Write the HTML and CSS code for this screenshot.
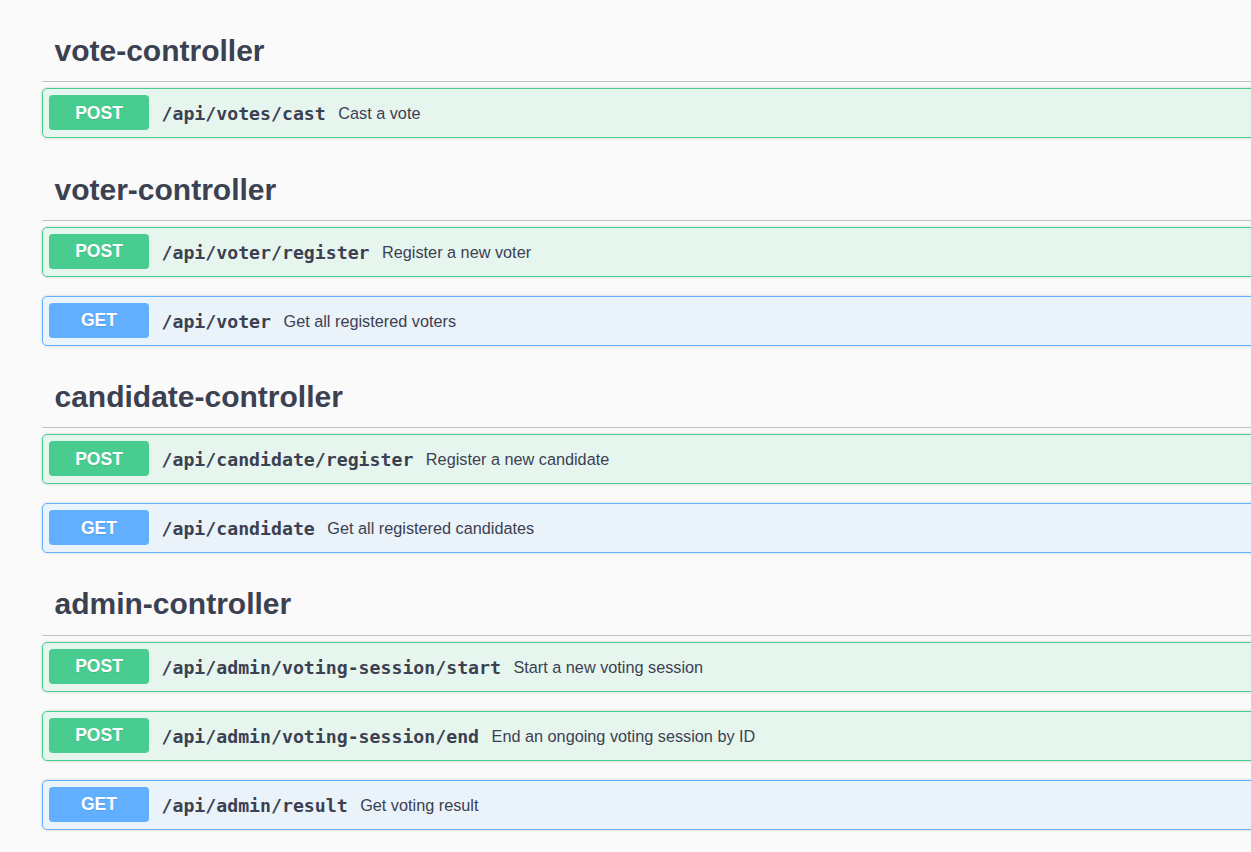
FILE: index.html
```html
<!DOCTYPE html>
<html>
<head>
<meta charset="utf-8">
<link rel="stylesheet" href="styles.css">
</head>
<body>
<div class="wrapper">
  <section class="tag-section">
    <h3 class="tag"><span>vote-controller</span></h3>
    <div class="opblock post">
      <div class="summary"><span class="method">POST</span><span class="path">/api/votes/cast</span><span class="desc">Cast a vote</span></div>
    </div>
  </section>
  <section class="tag-section">
    <h3 class="tag"><span>voter-controller</span></h3>
    <div class="opblock post">
      <div class="summary"><span class="method">POST</span><span class="path">/api/voter/register</span><span class="desc">Register a new voter</span></div>
    </div>
    <div class="opblock get">
      <div class="summary"><span class="method">GET</span><span class="path">/api/voter</span><span class="desc">Get all registered voters</span></div>
    </div>
  </section>
  <section class="tag-section">
    <h3 class="tag"><span>candidate-controller</span></h3>
    <div class="opblock post">
      <div class="summary"><span class="method">POST</span><span class="path">/api/candidate/register</span><span class="desc">Register a new candidate</span></div>
    </div>
    <div class="opblock get">
      <div class="summary"><span class="method">GET</span><span class="path">/api/candidate</span><span class="desc">Get all registered candidates</span></div>
    </div>
  </section>
  <section class="tag-section">
    <h3 class="tag"><span>admin-controller</span></h3>
    <div class="opblock post">
      <div class="summary"><span class="method">POST</span><span class="path">/api/admin/voting-session/start</span><span class="desc">Start a new voting session</span></div>
    </div>
    <div class="opblock post">
      <div class="summary"><span class="method">POST</span><span class="path">/api/admin/voting-session/end</span><span class="desc">End an ongoing voting session by ID</span></div>
    </div>
    <div class="opblock get">
      <div class="summary"><span class="method">GET</span><span class="path">/api/admin/result</span><span class="desc">Get voting result</span></div>
    </div>
  </section>
</div>
</body>
</html>
```

FILE: styles.css
```css
html, body {
  margin: 0;
  padding: 0;
  overflow: hidden;
  background: #fafafa;
}
body {
  font-family: "Liberation Sans", Arial, sans-serif;
  color: #3b4151;
}
.wrapper {
  width: 1280px;
  margin-left: 42px;
  padding-top: 19px;
}
.tag {
  box-sizing: border-box;
  height: 63.4px;
  margin: 0 0 6px 0;
  padding: 2px 25px 0 12.5px;
  display: flex;
  align-items: center;
  border-bottom: 1px solid rgba(59, 65, 81, 0.3);
  font-size: 30px;
  font-weight: bold;
  color: #3b4151;
}
.opblock {
  box-sizing: border-box;
  height: 50px;
  border: 1px solid;
  border-radius: 5px;
  margin-bottom: 19px;
  box-shadow: 0 0 3px rgba(0, 0, 0, 0.19);
}
.opblock.post {
  border-color: #49cc90;
  background: rgba(73, 204, 144, 0.1);
}
.opblock.get {
  border-color: #61affe;
  background: rgba(97, 175, 254, 0.1);
}
.summary {
  display: flex;
  align-items: center;
  padding: 6px;
}
.method {
  box-sizing: border-box;
  width: 100px;
  height: 35px;
  padding: 7.5px 0;
  line-height: 20px;
  font-size: 17.5px;
  font-weight: bold;
  text-align: center;
  color: #fff;
  border-radius: 3.75px;
  text-shadow: 0 1px 0 rgba(0, 0, 0, 0.1);
}
.post .method { background: #49cc90; }
.get .method { background: #61affe; }
.path {
  padding: 2px 12.5px 0 12.5px;
  font-family: "DejaVu Sans Mono", "Liberation Mono", monospace;
  font-weight: bold;
  font-size: 18.2px;
  color: #3b4151;
}
.desc {
  padding-top: 2px;
  font-size: 16.25px;
  color: #3b4151;
}
```
